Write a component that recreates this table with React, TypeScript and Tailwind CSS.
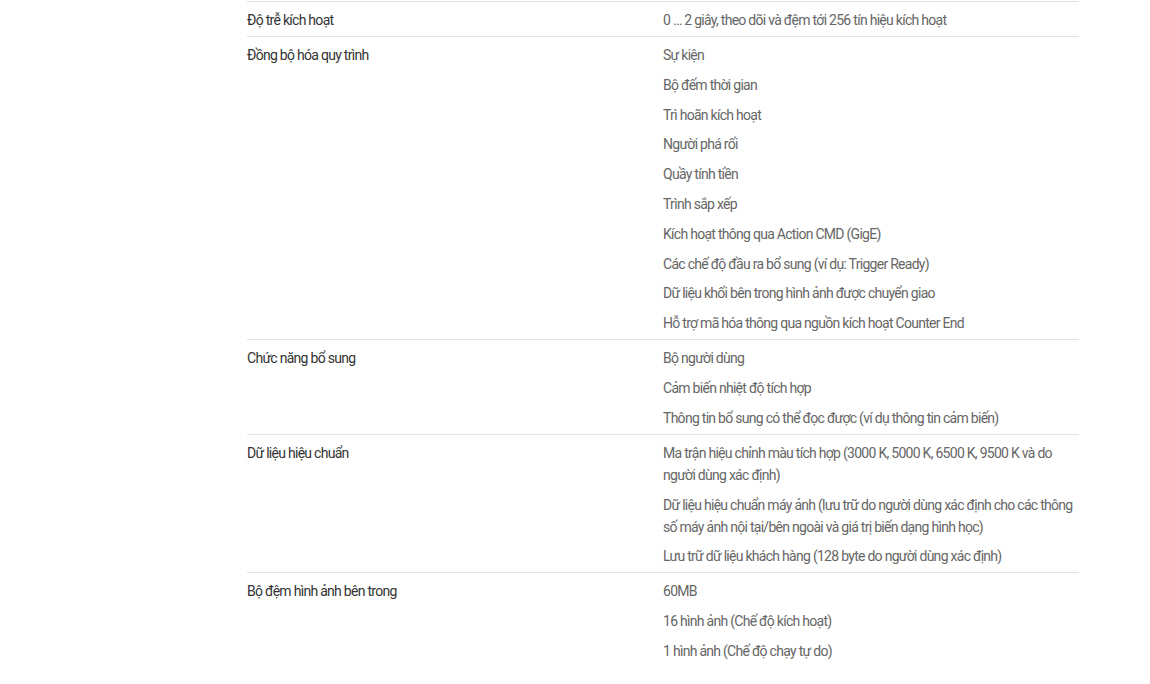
import React from "react";

type Spec = { label: string; values: string[] };

const specs: Spec[] = [
  { label: "Độ trễ kích hoạt", values: ["0 … 2 giây, theo dõi và đệm tới 256 tín hiệu kích hoạt"] },
  {
    label: "Đồng bộ hóa quy trình",
    values: [
      "Sự kiện",
      "Bộ đếm thời gian",
      "Trì hoãn kích hoạt",
      "Người phá rối",
      "Quầy tính tiền",
      "Trình sắp xếp",
      "Kích hoạt thông qua Action CMD (GigE)",
      "Các chế độ đầu ra bổ sung (ví dụ: Trigger Ready)",
      "Dữ liệu khối bên trong hình ảnh được chuyển giao",
      "Hỗ trợ mã hóa thông qua nguồn kích hoạt Counter End",
    ],
  },
  {
    label: "Chức năng bổ sung",
    values: ["Bộ người dùng", "Cảm biến nhiệt độ tích hợp", "Thông tin bổ sung có thể đọc được (ví dụ thông tin cảm biến)"],
  },
  {
    label: "Dữ liệu hiệu chuẩn",
    values: [
      "Ma trận hiệu chỉnh màu tích hợp (3000 K, 5000 K, 6500 K, 9500 K và do người dùng xác định)",
      "Dữ liệu hiệu chuẩn máy ảnh (lưu trữ do người dùng xác định cho các thông số máy ảnh nội tại/bên ngoài và giá trị biến dạng hình học)",
      "Lưu trữ dữ liệu khách hàng (128 byte do người dùng xác định)",
    ],
  },
  {
    label: "Bộ đệm hình ảnh bên trong",
    values: ["60MB", "16 hình ảnh (Chế độ kích hoạt)", "1 hình ảnh (Chế độ chạy tự do)"],
  },
];

function SpecRow({ spec }: { spec: Spec }) {
  return (
    <div className="grid grid-cols-2 border-t border-[#e2e2e2] pt-[7px] pb-[5px]">
      <div className="pr-2 text-[14px] leading-[22px] text-[#333]">{spec.label}</div>
      <div className="flex flex-col gap-[7.8px] pr-1 text-[14px] leading-[22px] text-[#666]">
        {spec.values.map((v) => (
          <p key={v}>{v}</p>
        ))}
      </div>
    </div>
  );
}

export default function App() {
  return (
    <div className="min-h-[684px] bg-white pt-px font-['Roboto',sans-serif] tracking-[-0.72px]">
      <div className="ml-[247px] w-[832px]">
        {specs.map((s) => (
          <SpecRow key={s.label} spec={s} />
        ))}
      </div>
    </div>
  );
}
